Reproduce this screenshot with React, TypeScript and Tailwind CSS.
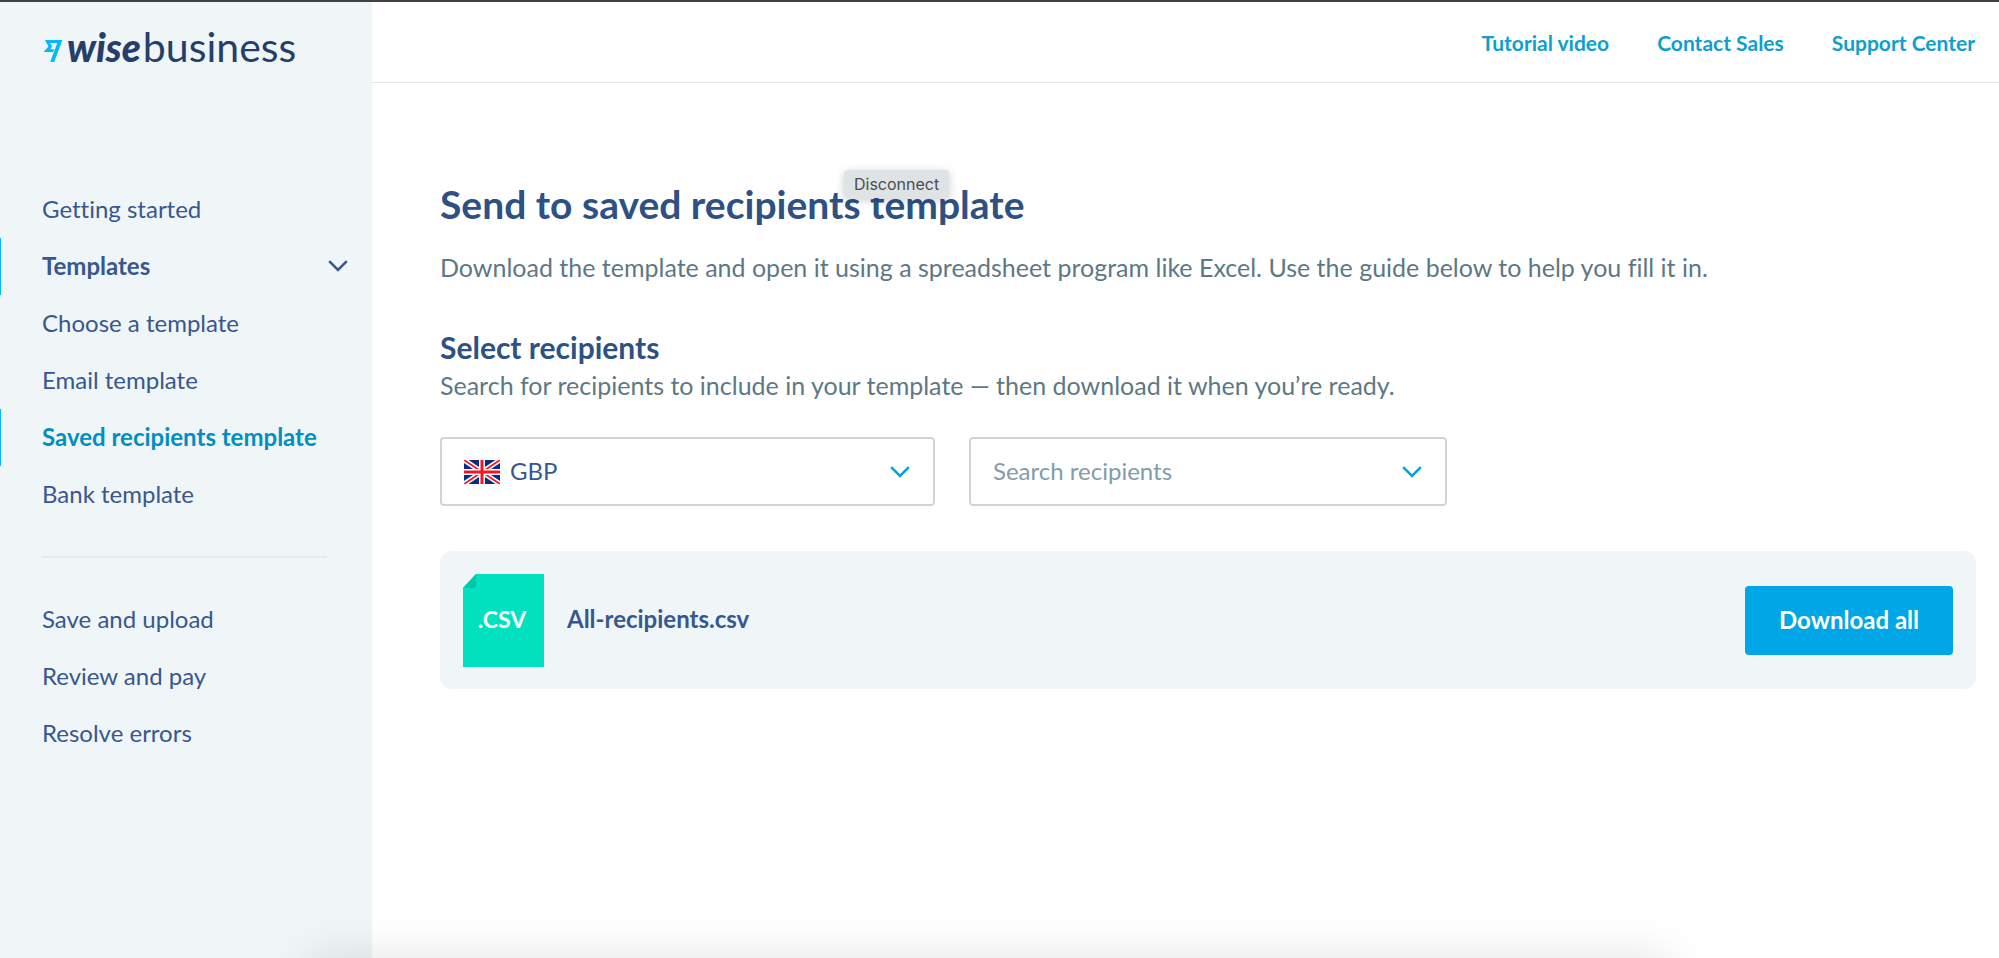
import { useState } from 'react';
import clsx from 'clsx';

type NavItem = { label: string; section?: boolean; active?: boolean };

const templateLinks: NavItem[] = [
  { label: 'Getting started' },
  { label: 'Templates', section: true },
  { label: 'Choose a template' },
  { label: 'Email template' },
  { label: 'Saved recipients template', active: true },
  { label: 'Bank template' },
];

const paymentLinks: NavItem[] = [
  { label: 'Save and upload' },
  { label: 'Review and pay' },
  { label: 'Resolve errors' },
];

const headerLinks = ['Tutorial video', 'Contact Sales', 'Support Center'];

function Chevron({ className }: { className?: string }) {
  return (
    <svg className={className} width="20" height="12" viewBox="0 0 20 12" fill="none" stroke="currentColor" strokeWidth="2.5" aria-hidden="true">
      <path d="M1.2 1.2 10 10 18.8 1.2" />
    </svg>
  );
}

function Logo() {
  return (
    <a href="#" className="flex items-baseline text-[#253f6d]">
      <svg className="mr-1 shrink-0" width="20" height="22" viewBox="0 0 20 22" fill="#00b9ff" aria-hidden="true">
        <path d="M2 0H19.4L11.2 22H7.2L14.3 3H7L9.2 6.3 7.2 9.2H11.2L10.2 12H0.6L5.4 6.4Z" />
      </svg>
      <span className="mr-[2px] text-[39px] leading-[48px] font-black italic">wise</span>
      <span className="text-[41px] leading-[48px]">business</span>
    </a>
  );
}

function UkFlag() {
  return (
    <svg width="36" height="24" viewBox="0 0 36 24" aria-hidden="true">
      <rect width="36" height="24" fill="#0b2a86" />
      <path d="M0 0 36 24M36 0 0 24" stroke="#fff" strokeWidth="5" />
      <path d="M0 0 36 24M36 0 0 24" stroke="#f31525" strokeWidth="1.8" />
      <path d="M18 0V24M0 12H36" stroke="#fff" strokeWidth="6" />
      <path d="M18 0V24M0 12H36" stroke="#f31525" strokeWidth="3" />
    </svg>
  );
}

function CsvIcon() {
  return (
    <svg className="shrink-0" width="81" height="93" viewBox="0 0 81 93" role="img" aria-label="CSV file">
      <path d="M13 0H81V93H0V14Z" fill="#00e2bf" />
      <path d="M13 0V14H0Z" fill="#00c7a9" />
      <text x="39" y="54" textAnchor="middle" fill="#fff" fontSize="23" fontWeight="700">.CSV</text>
    </svg>
  );
}

function NavList({ items }: { items: NavItem[] }) {
  return (
    <ul>
      {items.map(({ label, section, active }) => (
        <li key={label}>
          <a
            href="#"
            className={clsx(
              'flex h-[57px] items-center justify-between border-l pr-6 pb-[2px] pl-[41px] text-2xl',
              section || active ? 'border-[#00b9ff] font-bold' : 'border-transparent',
              active ? 'text-[#008fc0]' : 'text-[#37588e]',
            )}
          >
            {label}
            {section && <Chevron />}
          </a>
        </li>
      ))}
    </ul>
  );
}

export default function App() {
  const [currency, setCurrency] = useState('GBP');
  const [search, setSearch] = useState('');

  return (
    <div className="relative flex min-h-screen overflow-hidden border-t-2 border-[#413f46] bg-white font-['Lato',sans-serif] [font-variant-ligatures:none]">
      <aside className="w-[372px] shrink-0 bg-[#f0f5f8]">
        <div className="h-[179px] pt-[21px] pl-[43px]">
          <Logo />
        </div>
        <nav aria-label="Batch payments">
          <NavList items={templateLinks} />
          <hr className="my-[33px] mr-[45px] ml-[42px] border-t-2 border-[#e7e9ec]" />
          <NavList items={paymentLinks} />
        </nav>
      </aside>

      <div className="min-w-0 flex-1">
        <header className="flex h-[81px] items-center justify-end gap-12 border-b border-[#e2e4e6] pt-[2px] pr-6 text-[21px] font-bold text-[#0e9fcf]">
          {headerLinks.map((label) => (
            <a key={label} href="#">{label}</a>
          ))}
        </header>

        <main className="pt-24 pr-[23px] pl-[68px] text-2xl text-[#5d7885]">
          <h1 className="relative w-fit text-[39px] leading-[50px] font-bold text-[#2e5184]">
            Send to saved recipients template
            <span role="tooltip" className="absolute -top-[9px] left-[404px] rounded-sm bg-[#dee3e6] px-[10px] font-['Inter',sans-serif] text-base leading-7 font-normal text-[#4a4d50] shadow-[0_2px_10px_rgba(0,0,0,0.2)]">
              Disconnect
            </span>
          </h1>
          <p className="mt-[22px] text-[25px] leading-8">
            Download the template and open it using a spreadsheet program like Excel. Use the guide below to help you fill it in.
          </p>
          <h2 className="mt-[46px] text-[30px] leading-9 font-bold text-[#2e5184]">Select recipients</h2>
          <p className="mt-1 text-[25px] leading-8">
            Search for recipients to include in your template — then download it when you’re ready.
          </p>

          <div className="mt-9 flex gap-[34px]">
            <label className="relative flex w-[495px] items-center">
              <span className="absolute left-6"><UkFlag /></span>
              <select
                aria-label="Currency"
                value={currency}
                onChange={(e) => setCurrency(e.target.value)}
                className="h-[69px] w-full appearance-none rounded-sm border-2 border-[#d1d5d9] bg-white pb-[2px] pl-[68px] text-[#37588e]"
              >
                <option>GBP</option>
              </select>
              <Chevron className="pointer-events-none absolute right-[25px] text-[#00a2dd]" />
            </label>
            <label className="relative flex w-[478px] items-center">
              <input
                type="text"
                role="combobox"
                aria-label="Search recipients"
                aria-expanded={false}
                placeholder="Search recipients"
                value={search}
                onChange={(e) => setSearch(e.target.value)}
                className="h-[69px] w-full rounded-sm border-2 border-[#d1d5d9] bg-white pr-16 pb-[2px] pl-[22px] text-[#37588e] placeholder:text-[#829ca9]"
              />
              <Chevron className="pointer-events-none absolute right-[25px] text-[#00a2dd]" />
            </label>
          </div>

          <section className="mt-[45px] flex h-[138px] items-center gap-[23px] rounded-xl bg-[#f0f5f8] px-[23px]">
            <CsvIcon />
            <span className="flex-1 pb-[2px] font-bold text-[#37588e]">All-recipients.csv</span>
            <button type="button" className="h-[69px] rounded-sm bg-[#00a6e6] px-[34px] font-bold text-white">
              Download all
            </button>
          </section>
        </main>
      </div>

      {/* soft shadow rising from below the window */}
      <div className="pointer-events-none absolute top-full right-[330px] left-[310px] h-10 shadow-[0_0_45px_2px_rgba(0,0,0,0.11)]" />
    </div>
  );
}
